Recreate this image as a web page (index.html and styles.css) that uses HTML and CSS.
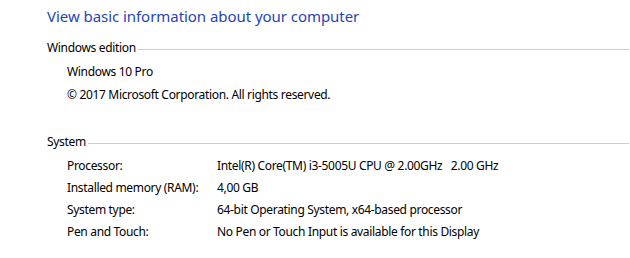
FILE: index.html
```html
<!DOCTYPE html>
<html lang="en">
<head>
    <meta charset="UTF-8">
    <meta name="viewport" content="width=device-width, initial-scale=1.0">
    <link rel="stylesheet" href="styles.css">
    <title>System</title>
</head>
<body>
    <div class="page">
        <h1 class="page-title">View basic information about your computer</h1>

        <div class="section">
            <div class="section-head">
                <span class="section-name">Windows edition</span>
                <span class="section-line"></span>
            </div>
            <div class="section-body">
                <div class="line">Windows 10 Pro</div>
                <div class="line">&copy; 2017 Microsoft Corporation. All rights reserved.</div>
            </div>
        </div>

        <div class="section section-system">
            <div class="section-head">
                <span class="section-name">System</span>
                <span class="section-line"></span>
            </div>
            <div class="section-body">
                <div class="prop">
                    <span class="prop-label">Processor:</span>
                    <span class="prop-value">Intel(R) Core(TM) i3-5005U CPU @ 2.00GHz&nbsp;&nbsp;&nbsp;2.00 GHz</span>
                </div>
                <div class="prop">
                    <span class="prop-label">Installed memory (RAM):</span>
                    <span class="prop-value">4,00 GB</span>
                </div>
                <div class="prop">
                    <span class="prop-label">System type:</span>
                    <span class="prop-value">64-bit Operating System, x64-based processor</span>
                </div>
                <div class="prop">
                    <span class="prop-label">Pen and Touch:</span>
                    <span class="prop-value">No Pen or Touch Input is available for this Display</span>
                </div>
            </div>
        </div>
    </div>
</body>
</html>
```

FILE: styles.css
```css
body {
    margin: 0;
    padding: 0;
    background-color: #fff;
    color: #000;
    font-family: "Noto Sans", "DejaVu Sans", sans-serif;
    font-size: 12px;
    line-height: 22px;
    letter-spacing: -0.33px;
}

.page {
    padding: 5px 1px 0 47px;
}

.page-title {
    margin: 0;
    font-size: 15px;
    font-weight: normal;
    line-height: 22px;
    letter-spacing: -0.05px;
    color: #1f45b5;
}

.section {
    margin-top: 10px;
}

.section-system {
    margin-top: 24px;
}

.section-head {
    display: flex;
    align-items: center;
}

.section-name {
    margin-right: 2px;
}

.section-line {
    flex: 1;
    border-top: 1px solid #cccccc;
    margin-top: 2px;
}

.section-body {
    padding-left: 20px;
    margin-top: 2px;
}

.line {
    height: 23px;
}

.prop {
    display: flex;
    height: 22px;
}

.prop-label {
    width: 150px;
}
```
